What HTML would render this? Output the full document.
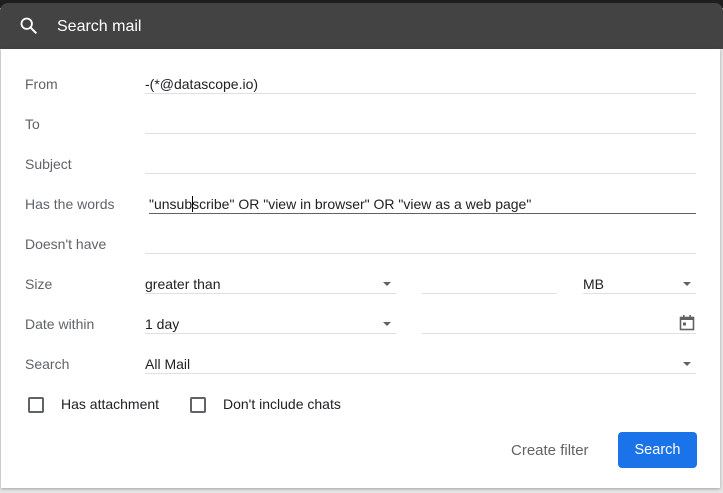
<!DOCTYPE html>
<html><head><style>
body{margin:0;width:723px;height:493px;background:#e6e6e6;font-family:"Liberation Sans",Arial,sans-serif;position:relative;overflow:hidden}
.top{position:absolute;left:0;top:0;width:723px;height:8px;background:#1e1e1e}
.hdr{position:absolute;left:0;top:3px;width:723px;height:46px;background:#434343;border-radius:8px 8px 0 0}
.hdr span{position:absolute;left:57px;top:15px;color:#fff;font-size:16px}
.body{position:absolute;left:1px;top:49px;width:719px;height:439px;background:#fff;box-shadow:0 1px 3px rgba(0,0,0,.3)}
.l{position:absolute;left:25px;font-size:14px;color:#5f6368}
.f{position:absolute;border-bottom:1px solid #e0e0e0;height:17px;padding-top:2px;font-size:14px;color:#202124}
.arr{position:absolute;width:0;height:0;border-left:4.5px solid transparent;border-right:4.5px solid transparent;border-top:4.5px solid #5f6368}
.cb{position:absolute;width:12px;height:12px;border:2px solid #5f6368;border-radius:2px;top:397px}
</style></head><body>
<div class="top"></div>
<div class="hdr">
<svg style="position:absolute;left:18px;top:12px" width="22" height="22" viewBox="0 0 24 24"><circle cx="9.5" cy="9.5" r="5.7" fill="none" stroke="#fff" stroke-width="2"/><path d="M14 14l6 6" stroke="#fff" stroke-width="2.2"/></svg>
<span>Search mail</span></div>
<div class="body"></div>
<div class="l" style="top:76px">From</div><div class="f" style="left:145px;width:551px;top:74px">-(*@datascope.io)</div>
<div class="l" style="top:116px">To</div><div class="f" style="left:145px;width:551px;top:114px"></div>
<div class="l" style="top:156px">Subject</div><div class="f" style="left:145px;width:551px;top:154px"></div>
<div class="l" style="top:196px">Has the words</div><div class="f" style="left:149px;width:547px;top:194px;border-bottom-color:#5f6368">"unsub<span style="border-left:1px solid #000;margin:0 -1px 0 0"></span>scribe" OR "view in browser" OR "view as a web page"</div>
<div class="l" style="top:236px">Doesn't have</div><div class="f" style="left:145px;width:551px;top:234px"></div>
<div class="l" style="top:276px">Size</div><div class="f" style="left:145px;width:251px;top:274px">greater than</div><div class="arr" style="left:383px;top:282px"></div>
<div class="f" style="left:422px;width:135px;top:274px"></div>
<div class="f" style="left:583px;width:113px;top:274px">MB</div><div class="arr" style="left:683px;top:282px"></div>
<div class="l" style="top:316px">Date within</div><div class="f" style="left:145px;width:251px;top:314px">1 day</div><div class="arr" style="left:383px;top:322px"></div>
<div class="f" style="left:422px;width:274px;top:314px"></div>
<svg style="position:absolute;left:678px;top:314px" width="18" height="18" viewBox="0 0 18 18"><rect x="2.5" y="3.5" width="13" height="12" fill="none" stroke="#5f6368" stroke-width="1.6"/><rect x="2" y="3" width="14" height="3" fill="#5f6368"/><rect x="5" y="1" width="1.6" height="3" fill="#5f6368"/><rect x="11.4" y="1" width="1.6" height="3" fill="#5f6368"/><rect x="5" y="8.5" width="3" height="3" fill="#5f6368"/></svg>
<div class="l" style="top:356px">Search</div><div class="f" style="left:145px;width:551px;top:354px">All Mail</div><div class="arr" style="left:683px;top:362px"></div>
<div class="cb" style="left:28px"></div><div class="l" style="left:61px;top:396px;color:#202124">Has attachment</div>
<div class="cb" style="left:190px"></div><div class="l" style="left:223px;top:396px;color:#202124">Don't include chats</div>
<div class="l" style="left:511px;top:442px;font-size:15px">Create filter</div>
<div style="position:absolute;left:618px;top:432px;width:79px;height:36px;background:#1a73e8;border-radius:4px;color:#fff;font-size:14.5px;text-align:center;line-height:36px">Search</div>
</body></html>
